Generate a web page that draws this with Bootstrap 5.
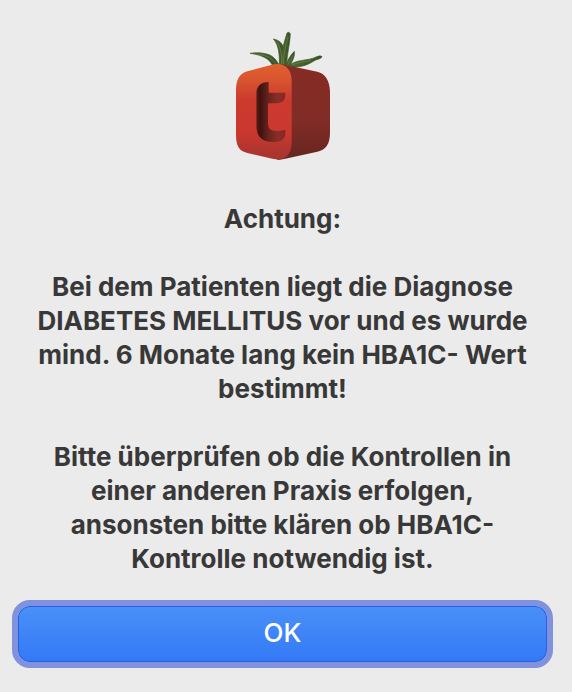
<!DOCTYPE html>
<html lang="de">
<head>
<meta charset="utf-8">
<meta name="viewport" content="width=device-width, initial-scale=1">
<title>Achtung</title>
<link href="https://cdn.jsdelivr.net/npm/bootstrap@5.3.0/dist/css/bootstrap.min.css" rel="stylesheet">
<style>
  body { background: #ebebeb; color: #383838; font-family: Inter, "Liberation Sans", sans-serif; font-optical-sizing: none; }
  .alert-window { padding: 24px 19px 24px 12px; }
  .app-icon { width: 120px; height: 144px; }
  .message { font-size: 26px; line-height: 34px; font-weight: 700; margin-top: 34px; padding: 0 16px; }
  .message p, .message h1 { font: inherit; margin: 0 0 34px; }
  .message p:last-child { margin-bottom: 24px; }
  .btn-ok {
    height: 68px; border: 6px solid #8091dd; border-radius: 18px; padding: 0 0 2px;
    font-size: 26px; line-height: 34px; font-weight: 500; color: #fff;
    background: linear-gradient(#4a90f8, #3379f6) padding-box;
    box-shadow: inset 0 0 0 1px #2560e4;
  }
  .btn-ok:hover, .btn-ok:focus-visible { color: #fff; border-color: #8091dd; }
</style>
</head>
<body>
<main class="alert-window d-flex flex-column" role="alertdialog" aria-labelledby="title" aria-describedby="text">
  <svg class="app-icon align-self-center" viewBox="3 0 360 432" aria-hidden="true">
    <defs>
      <linearGradient id="front" x1="0" y1="0" x2="0" y2="1">
        <stop offset="0" stop-color="#e0602f"/><stop offset=".16" stop-color="#d9552f"/>
        <stop offset=".38" stop-color="#cc392f"/><stop offset=".72" stop-color="#cb382f"/>
        <stop offset=".9" stop-color="#b0352f"/><stop offset="1" stop-color="#a8342e"/>
      </linearGradient>
      <linearGradient id="side" x1="0" y1="0" x2="0" y2="1">
        <stop offset="0" stop-color="#862b25"/><stop offset=".6" stop-color="#812c26"/>
        <stop offset="1" stop-color="#65261f"/>
      </linearGradient>
      <linearGradient id="groove" x1="0" y1="0" x2="1" y2="0">
        <stop offset="0" stop-color="#641d18"/><stop offset=".12" stop-color="#3b130f"/>
        <stop offset=".45" stop-color="#6d241f"/><stop offset=".75" stop-color="#8c2d27"/>
        <stop offset="1" stop-color="#812a24"/>
      </linearGradient>
      <linearGradient id="leaf" x1="0" y1="0" x2="1" y2="0">
        <stop offset="0" stop-color="#4d6a30"/><stop offset="1" stop-color="#35502a"/>
      </linearGradient>
    </defs>
    <g fill="url(#leaf)" stroke="#3d5629" stroke-width="2" stroke-linejoin="round">
      <path d="M84 88C108 84 142 87 155 101C162 107 167 115 172 124L150 122C143 106 122 93 84 88Z"/>
      <path d="M154 45C172 48 184 60 185 76L187 124H172C173 91 170 62 154 45Z"/>
      <path d="M195 27Q200 22 205 29C204 61 195 88 194 124H174C177 87 185 59 195 27Z"/>
      <path d="M217 82C219 98 212 109 204 125H190C198 108 204 94 217 82Z"/>
      <path d="M201 125C225 104 258 112 284 98Q296 93 300 98C296 107 284 104 274 112C252 126 232 130 211 129Z"/>
    </g>
    <g fill="none" stroke="#76894a" stroke-width="2">
      <path d="M110 91Q147 94 162 121"/><path d="M166 54Q181 79 179 121"/>
      <path d="M198 38Q184 87 184 122"/><path d="M213 94Q204 111 198 122"/>
      <path d="M211 122Q243 112 268 110"/>
    </g>
    <path fill="url(#side)" d="M166 121Q180 120 205 126L286 143C310 149 323 169 324 202V326C324 358 313 377 286 383L190 404Q178 407 166 408Z"/>
    <path fill="url(#front)" d="M42 202C42 167 52 149 76 142L150 122C187 114 209 134 209 170V352C209 391 192 414 151 404L76 387C52 382 42 366 42 334Z"/>
    <path fill="url(#groove)" d="M103 208C103 187 117 174 140 174V206H190V216Q188 236 167 238H138V296C138 321 155 325 190 317V327C190 347 176 354 154 354C120 354 103 338 103 306Z"/>
  </svg>
  <div class="message text-center">
    <h1 id="title">Achtung:</h1>
    <div id="text">
      <p>Bei dem Patienten liegt die Diagnose DIABETES MELLITUS vor und es wurde mind. 6 Monate lang kein HBA1C- Wert bestimmt!</p>
      <p>Bitte überprüfen ob die Kontrollen in einer anderen Praxis erfolgen, ansonsten bitte klären ob HBA1C-Kontrolle notwendig ist.</p>
    </div>
  </div>
  <button type="button" class="btn btn-ok w-100">OK</button>
</main>
<script src="https://cdn.jsdelivr.net/npm/bootstrap@5.3.0/dist/js/bootstrap.bundle.min.js"></script>
</body>
</html>
